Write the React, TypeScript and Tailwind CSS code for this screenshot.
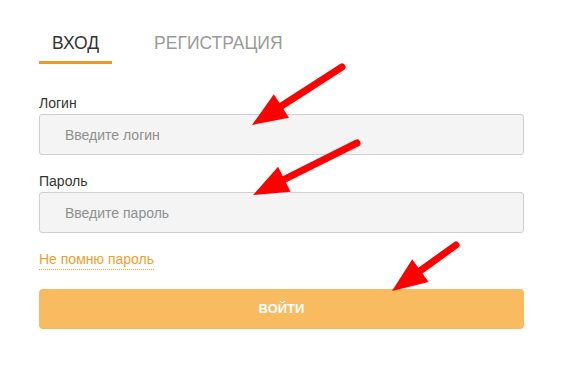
import React from 'react';

type Pt = [number, number];

const arrows: { tail: Pt; tip: Pt }[] = [
    { tail: [342, 67], tip: [252, 125] },
    { tail: [357, 143], tip: [253, 195] },
    { tail: [456, 245], tip: [392, 291] },
];

const Arrow: React.FC<{ tail: Pt; tip: Pt }> = ({ tail, tip }) => {
    const dx = tail[0] - tip[0];
    const dy = tail[1] - tip[1];
    const len = Math.hypot(dx, dy);
    const ux = dx / len;
    const uy = dy / len;
    const headLen = 35;
    const half = 14;
    const bx = tip[0] + ux * headLen;
    const by = tip[1] + uy * headLen;
    const points = [
        `${tip[0]},${tip[1]}`,
        `${bx - uy * half},${by + ux * half}`,
        `${bx + uy * half},${by - ux * half}`,
    ].join(' ');
    return (
        <g>
            <line x1={tail[0]} y1={tail[1]} x2={bx} y2={by} stroke="#ff0000" strokeWidth={7} strokeLinecap="round" />
            <polygon points={points} fill="#ff0000" />
        </g>
    );
};

const Field: React.FC<{ label: string; placeholder: string; type?: string }> = ({ label, placeholder, type = 'text' }) => (
    <div className="flex flex-col">
        <label className="text-[14px] leading-[16px] text-[#333] mb-[3px]">{label}</label>
        <input
            type={type}
            placeholder={placeholder}
            className="h-[41px] w-full rounded-[3px] border border-[#cfcfcf] bg-[#f4f4f4] pl-[25px] text-[14px] text-[#333] placeholder:text-[#8f8f8f] outline-none"
        />
    </div>
);

export default function App() {
    return (
        <div className="relative w-[576px] h-[371px] bg-white font-['Liberation_Sans',Arial,sans-serif]">
            <div className="pl-[39px] pt-[33px] w-[524px]">
                <div className="flex gap-[29px]">
                    <div className="px-[13px] pb-[8px] border-b-[3px] border-[#eb9a28] text-[17.5px] leading-[20px] text-[#333]">
                        ВХОД
                    </div>
                    <div className="px-[13px] pb-[8px] text-[17.5px] leading-[20px] text-[#9a9a9a]">
                        РЕГИСТРАЦИЯ
                    </div>
                </div>

                <div className="mt-[31px]">
                    <Field label="Логин" placeholder="Введите логин" />
                </div>
                <div className="mt-[18px]">
                    <Field label="Пароль" placeholder="Введите пароль" type="password" />
                </div>

                <div className="mt-[18px] leading-[16px]">
                    <a className="text-[14px] text-[#f0a02e] border-b border-dotted border-[#f0a02e] pb-[2px]">
                        Не помню пароль
                    </a>
                </div>

                <button className="mt-[22px] h-[40px] w-full rounded-[4px] bg-[#f9bb5f] text-[13px] font-bold text-white">
                    ВОЙТИ
                </button>
            </div>

            <svg className="absolute left-0 top-0 pointer-events-none" width={576} height={371}>
                {arrows.map((a, i) => (
                    <Arrow key={i} tail={a.tail} tip={a.tip} />
                ))}
            </svg>
        </div>
    );
}
